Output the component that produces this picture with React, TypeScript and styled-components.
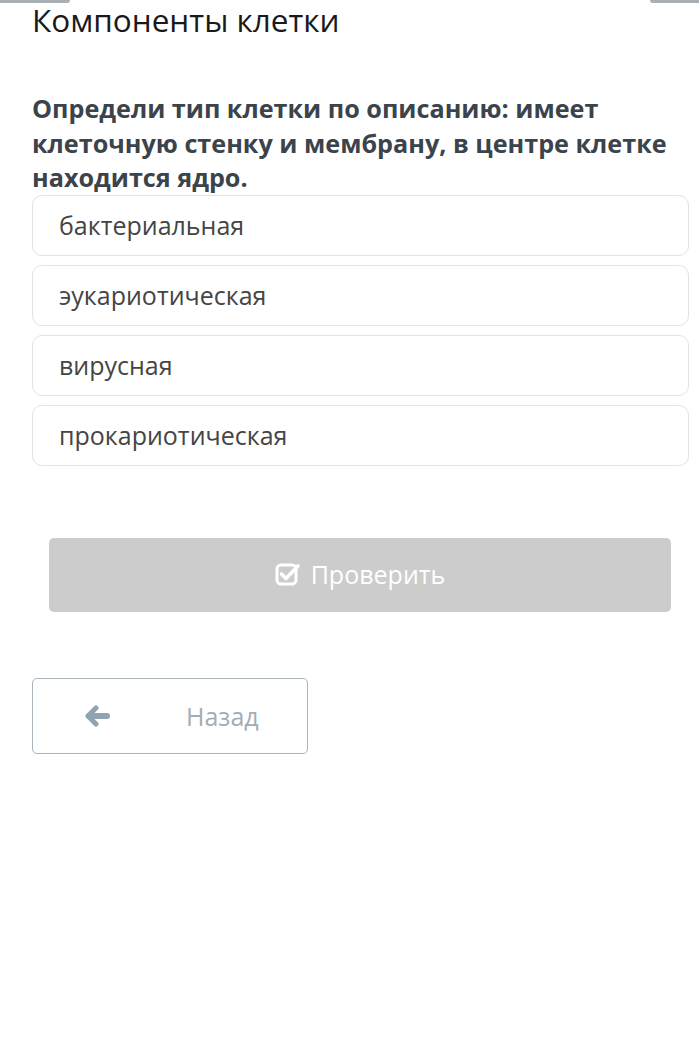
import React from "react";
import styled, { createGlobalStyle } from "styled-components";

const Global = createGlobalStyle`
  html, body { margin: 0; padding: 0; background: #ffffff; }
  body { font-family: "Open Sans", "Noto Sans", sans-serif; }
  * { box-sizing: border-box; }
`;

const Page = styled.div`
  width: 699px;
  height: 1060px;
  background: #fff;
  display: flex;
  flex-direction: column;
  overflow: hidden;
`;

const TopStrip = styled.div`
  display: flex;
  justify-content: space-between;
  height: 3px;
`;

const Stub = styled.div<{ $w: number; $side: "left" | "right" }>`
  width: ${(p) => p.$w}px;
  height: 3px;
  background: #a9b0b5;
  border-bottom-${(p) => (p.$side === "left" ? "right" : "left")}-radius: 3px;
`;

const Content = styled.div`
  padding: 0 10px 0 32px;
  display: flex;
  flex-direction: column;
`;

const Title = styled.h1`
  margin: 0;
  font-size: 31.5px;
  font-weight: 400;
  line-height: 34px;
  color: #1a1a1a;
`;

const Question = styled.p`
  margin: 54px 0 0;
  font-size: 25.2px;
  font-weight: 700;
  line-height: 34.5px;
  color: #3b434b;
`;

const Options = styled.div`
  display: flex;
  flex-direction: column;
  gap: 9px;
  margin-top: 0;
`;

const Option = styled.div`
  height: 61px;
  border: 1px solid #e2e2e2;
  border-radius: 10px;
  padding: 0 0 0 26px;
  display: flex;
  align-items: center;
  font-size: 25px;
  color: #454545;
`;

const CheckWrap = styled.div`
  padding: 72px 18px 0 17px;
`;

const CheckButton = styled.div`
  height: 74px;
  border-radius: 5px;
  background: #cccccc;
  color: #ffffff;
  display: flex;
  align-items: center;
  justify-content: center;
  gap: 10px;
  font-size: 25px;
  padding-bottom: 2px;
`;

const BackButton = styled.div`
  margin-top: 66px;
  width: 276px;
  height: 76px;
  border: 1px solid #aab4bb;
  border-radius: 5px;
  display: flex;
  align-items: center;
  padding-left: 52px;
  gap: 75px;
  font-size: 25px;
  color: #a3adb5;
`;

const CheckIcon = () => (
  <svg width="26" height="24" viewBox="0 0 26 24" aria-hidden="true">
    <rect x="2" y="3" width="19" height="19" rx="4" fill="none" stroke="#fff" strokeWidth="3" />
    <path d="M6.5 12 L11 16.5 L23 4" fill="none" stroke="#fff" strokeWidth="3.6" strokeLinecap="round" strokeLinejoin="round" />
  </svg>
);

const ArrowIcon = () => (
  <svg width="26" height="22" viewBox="0 0 26 22" aria-hidden="true">
    <path d="M11 3 L3 11 L11 19" fill="none" stroke="#8fa3b0" strokeWidth="5" strokeLinecap="round" strokeLinejoin="round" />
    <path d="M4 11 H22" stroke="#8fa3b0" strokeWidth="6" strokeLinecap="round" />
  </svg>
);

const options = ["бактериальная", "эукариотическая", "вирусная", "прокариотическая"];

export default function App() {
  return (
    <Page>
      <Global />
      <TopStrip>
        <Stub $w={70} $side="left" />
        <Stub $w={49} $side="right" />
      </TopStrip>
      <Content>
        <Title>Компоненты клетки</Title>
        <Question>
          Определи тип клетки по описанию: имеет клеточную стенку и мембрану, в центре клетке находится ядро.
        </Question>
        <Options>
          {options.map((o) => (
            <Option key={o}>{o}</Option>
          ))}
        </Options>
        <CheckWrap>
          <CheckButton>
            <CheckIcon />
            Проверить
          </CheckButton>
        </CheckWrap>
        <BackButton>
          <ArrowIcon />
          Назад
        </BackButton>
      </Content>
    </Page>
  );
}
